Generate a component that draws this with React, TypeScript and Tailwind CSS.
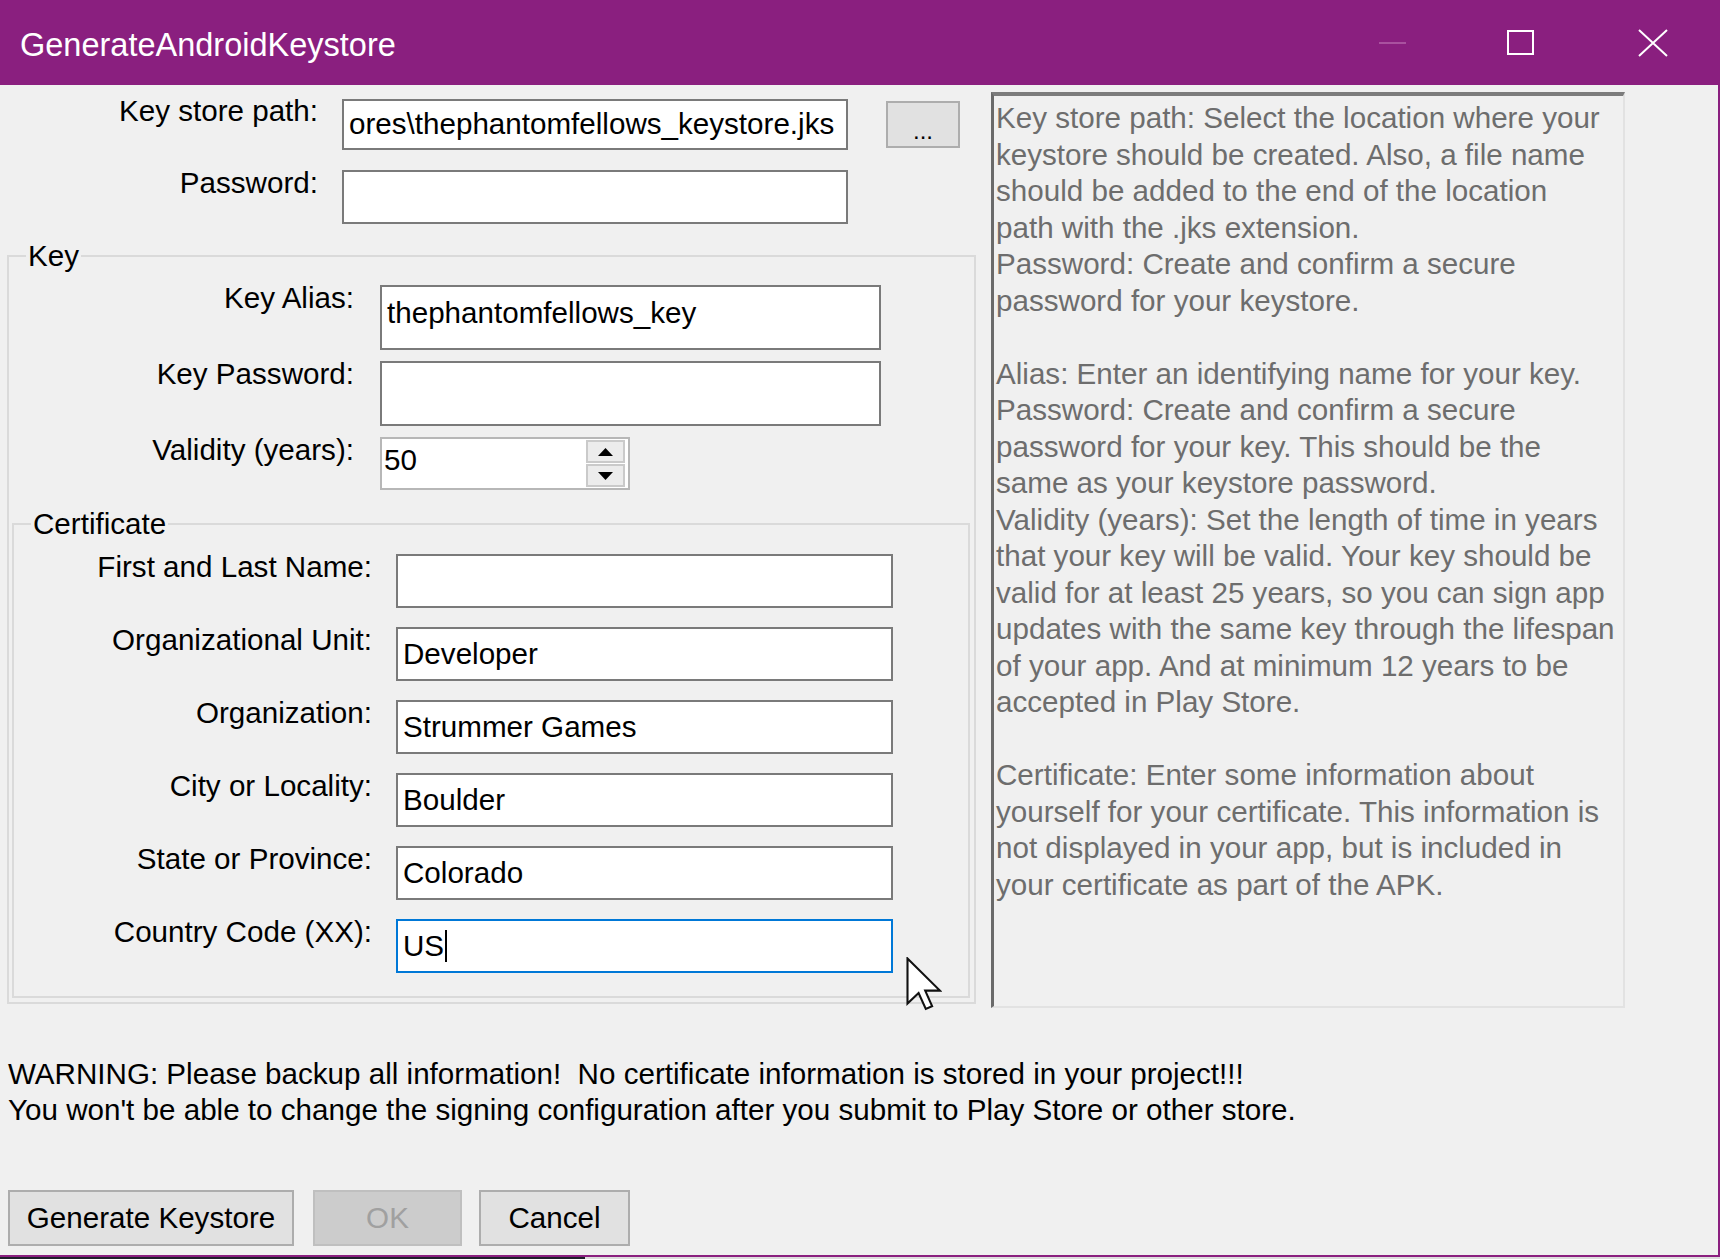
import React from "react";

const helpLines: string[] = [
  "Key store path: Select the location where your",
  "keystore should be created. Also, a file name",
  "should be added to the end of the location",
  "path with the .jks extension.",
  "Password: Create and confirm a secure",
  "password for your keystore.",
  "",
  "Alias: Enter an identifying name for your key.",
  "Password: Create and confirm a secure",
  "password for your key. This should be the",
  "same as your keystore password.",
  "Validity (years): Set the length of time in years",
  "that your key will be valid. Your key should be",
  "valid for at least 25 years, so you can sign app",
  "updates with the same key through the lifespan",
  "of your app. And at minimum 12 years to be",
  "accepted in Play Store.",
  "",
  "Certificate: Enter some information about",
  "yourself for your certificate. This information is",
  "not displayed in your app, but is included in",
  "your certificate as part of the APK.",
];

type BoxProps = { value?: string; className: string; focused?: boolean };

function TextBox({ value, className, focused }: BoxProps) {
  return (
    <div
      className={`flex items-center overflow-hidden whitespace-nowrap bg-white border-2 ${
        focused ? "border-[#0078d7]" : "border-[#7a7a7a]"
      } ${className}`}
    >
      <span className="pl-[5px] text-black">{value}</span>
      {focused && <span className="ml-[1px] h-[32px] w-[2px] bg-black" />}
    </div>
  );
}

function Spinner() {
  return (
    <div className="ml-[26px] mt-[4px] flex h-[53px] w-[250px] border-2 border-[#b7b7b7] bg-white">
      <div className="flex flex-1 items-center pb-[7px] pl-[2px] text-black">50</div>
      <div className="my-[1px] mr-[3px] flex w-[39px] flex-col gap-[1px]">
        <div className="flex flex-1 items-center justify-center border-2 border-[#cacaca] bg-[#ececec]">
          <svg width="15" height="8" viewBox="0 0 15 8">
            <path d="M7.5 0 L15 8 L0 8 Z" fill="#000" />
          </svg>
        </div>
        <div className="flex flex-1 items-center justify-center border-2 border-[#cacaca] bg-[#ececec]">
          <svg width="15" height="8" viewBox="0 0 15 8">
            <path d="M0 0 L15 0 L7.5 8 Z" fill="#000" />
          </svg>
        </div>
      </div>
    </div>
  );
}

function CertRow({ label, value, focused }: { label: string; value?: string; focused?: boolean }) {
  return (
    <div className="flex items-start">
      <div className="w-[358px] whitespace-nowrap text-right leading-[34px]">{label}</div>
      <TextBox className="ml-[24px] mt-[4px] h-[54px] w-[497px]" value={value} focused={focused} />
    </div>
  );
}

function CursorArrow() {
  return (
    <svg
      className="absolute left-[906px] top-[957px]"
      width="36"
      height="54"
      viewBox="0 0 12 18"
    >
      <path
        d="M0.5 0.5 L0.5 15.5 L4.2 12 L6.6 17.3 L8.7 16.4 L6.4 11.2 L11.3 11.2 Z"
        fill="#fff"
        stroke="#111"
        strokeWidth="0.7"
        strokeLinejoin="miter"
      />
    </svg>
  );
}

export default function App() {
  return (
    <div className="relative flex h-[1259px] w-[1720px] flex-col overflow-hidden bg-[#f0f0f0] font-['Liberation_Sans',Arial,sans-serif] text-[29.6px] text-black">
      {/* caption bar */}
      <div className="flex h-[85px] shrink-0 items-center bg-[#8a1f7f] text-white">
        <div className="pl-[20px] pt-[5px] text-[32.5px] leading-none">GenerateAndroidKeystore</div>
        <div className="ml-auto flex h-full">
          <div className="flex w-[128px] items-center justify-center">
            <div className="h-[2px] w-[27px] bg-[#a9519f]" />
          </div>
          <div className="flex w-[129px] items-center justify-center">
            <div className="h-[25px] w-[27px] border-2 border-white" />
          </div>
          <div className="flex w-[135px] items-center justify-center">
            <svg width="30" height="28" viewBox="0 0 30 28">
              <path d="M1 1 L29 27 M29 1 L1 27" stroke="#fff" strokeWidth="2" />
            </svg>
          </div>
        </div>
      </div>

      {/* dialog body */}
      <div className="flex h-[1172px] shrink-0 flex-col border-b-2 border-r-2 border-[#8a1f7f]">
        <div className="flex items-start">
          {/* form column */}
          <div className="flex w-[976px] shrink-0 flex-col">
            <div className="mt-[9px] flex items-start">
              <div className="w-[318px] whitespace-nowrap text-right leading-[34px]">Key store path:</div>
              <TextBox
                className="ml-[24px] mt-[5px] h-[51px] w-[506px]"
                value={"ores\\thephantomfellows_keystore.jks"}
              />
              <div className="ml-[38px] mt-[7px] flex h-[47px] w-[74px] items-center justify-center border-2 border-[#adadad] bg-[#e1e1e1] leading-none">
                <span className="pt-[12px] text-[24px]">...</span>
              </div>
            </div>
            <div className="mt-[16px] flex items-start">
              <div className="w-[318px] whitespace-nowrap text-right leading-[34px]">Password:</div>
              <TextBox className="ml-[24px] mt-[4px] h-[54px] w-[506px]" />
            </div>

            <fieldset className="ml-[7px] mt-[15px] w-[969px] border-2 border-[#dadada] pb-[4px]">
              <legend className="ml-[17px] px-[2px] leading-[34px]">Key</legend>
              <div className="mt-[8px] flex flex-col gap-[7px]">
                <div className="flex items-start">
                  <div className="w-[345px] whitespace-nowrap text-right leading-[34px]">Key Alias:</div>
                  <TextBox className="ml-[26px] mt-[4px] h-[65px] w-[501px] pb-[9px]" value="thephantomfellows_key" />
                </div>
                <div className="flex items-start">
                  <div className="w-[345px] whitespace-nowrap text-right leading-[34px]">Key Password:</div>
                  <TextBox className="ml-[26px] mt-[4px] h-[65px] w-[501px]" />
                </div>
                <div className="flex items-start">
                  <div className="w-[345px] whitespace-nowrap text-right leading-[34px]">Validity (years):</div>
                  <Spinner />
                </div>
              </div>

              <fieldset className="ml-[3px] mt-[17px] w-[958px] border-2 border-[#dadada] pb-[23px]">
                <legend className="ml-[17px] px-[2px] leading-[34px]">Certificate</legend>
                <div className="mt-[9px] flex flex-col gap-[15px]">
                  <CertRow label="First and Last Name:" />
                  <CertRow label="Organizational Unit:" value="Developer" />
                  <CertRow label="Organization:" value="Strummer Games" />
                  <CertRow label="City or Locality:" value="Boulder" />
                  <CertRow label="State or Province:" value="Colorado" />
                  <CertRow label="Country Code (XX):" value="US" focused />
                </div>
              </fieldset>
            </fieldset>
          </div>

          {/* help panel */}
          <div className="ml-[15px] mt-[7px] h-[916px] w-[634px] shrink-0 border-b-2 border-l-[3px] border-r-2 border-t-[4px] border-b-[#e2e2e2] border-l-[#6a6a6a] border-r-[#e2e2e2] border-t-[#7c7c7c] pl-[2px] pt-[4px] leading-[36.5px] text-[#6d6d6d]">
            {helpLines.map((line, i) => (
              <div key={i} className="h-[36.5px] whitespace-pre">
                {line}
              </div>
            ))}
          </div>
        </div>

        <div className="mt-[48px] pl-[8px] leading-[36px]">
          <div className="whitespace-pre">
            WARNING: Please backup all information!  No certificate information is stored in your project!!!
          </div>
          <div className="whitespace-pre">
            You won't be able to change the signing configuration after you submit to Play Store or other store.
          </div>
        </div>

        <div className="mt-[62px] flex">
          <div className="ml-[8px] flex h-[56px] w-[286px] items-center justify-center border-2 border-[#adadad] bg-[#e1e1e1]">
            Generate Keystore
          </div>
          <div className="ml-[19px] flex h-[56px] w-[149px] items-center justify-center border-2 border-[#bfbfbf] bg-[#cccccc] text-[#a0a0a0]">
            OK
          </div>
          <div className="ml-[17px] flex h-[56px] w-[151px] items-center justify-center border-2 border-[#adadad] bg-[#e1e1e1]">
            Cancel
          </div>
        </div>
      </div>

      <div className="flex h-[2px] shrink-0">
        <div className="w-[585px] bg-[#1e1e2a]" />
        <div className="flex-1 bg-[#dcdcdc]" />
      </div>

      <CursorArrow />
    </div>
  );
}
